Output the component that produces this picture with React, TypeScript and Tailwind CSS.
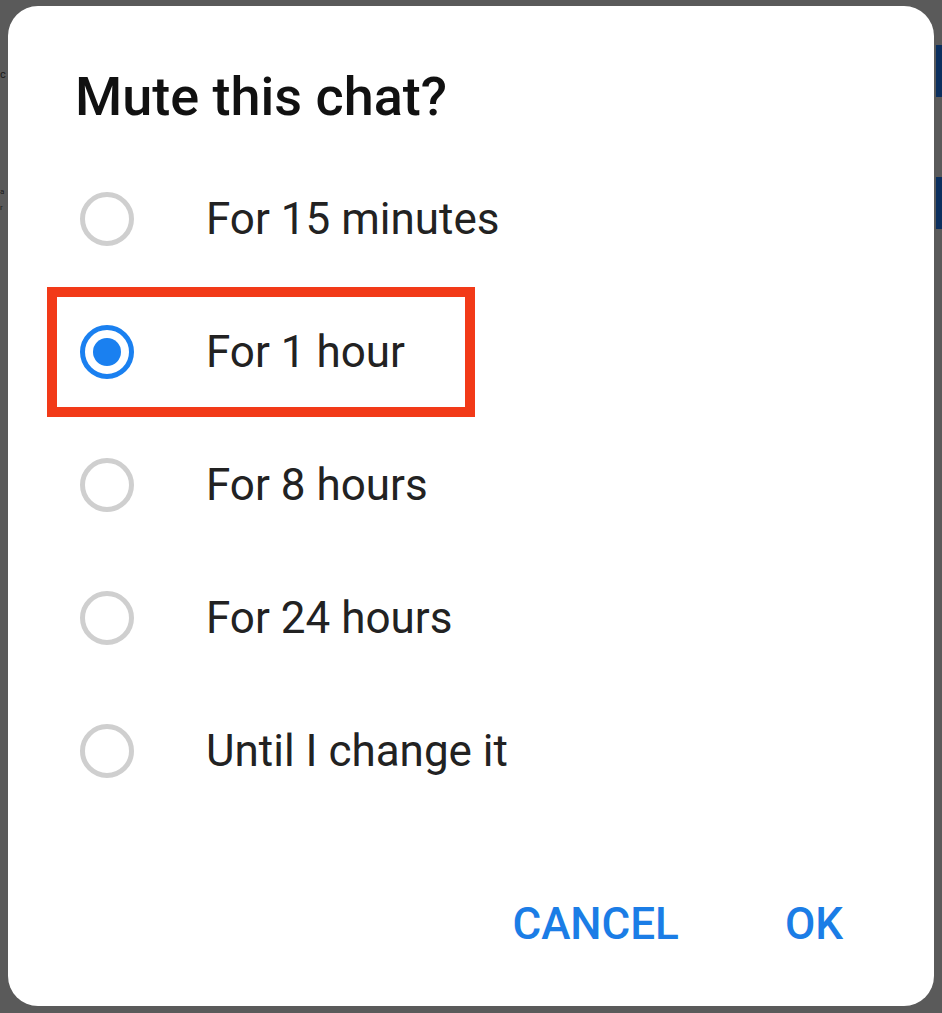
import React from "react";

const options = [
  "For 15 minutes",
  "For 1 hour",
  "For 8 hours",
  "For 24 hours",
  "Until I change it",
];

function Radio({ checked }: { checked: boolean }) {
  if (checked) {
    return (
      <div className="w-[54px] h-[54px] rounded-full border-[5px] border-[#1a80f0] flex items-center justify-center shrink-0">
        <div className="w-[28px] h-[28px] rounded-full bg-[#1a80f0]" />
      </div>
    );
  }
  return <div className="w-[54px] h-[54px] rounded-full border-[5px] border-[#cfcfcf] shrink-0" />;
}

export default function App() {
  return (
    <div
      className="w-[942px] h-[1013px] bg-[#5a5a5a] flex flex-row overflow-hidden"
      style={{ fontFamily: "Roboto, 'Noto Sans', sans-serif" }}
    >
      {/* left strip with bits of background text */}
      <div className="w-[8px] shrink-0 flex flex-col items-start">
        <div className="mt-[62px] text-[11px] leading-[26px] text-[#1a1a1a]">c</div>
        <div className="mt-[98px] text-[8px] leading-[12px] text-[#1a1a1a]">a</div>
        <div className="mt-[4px] text-[8px] leading-[12px] text-[#1a1a1a]">r</div>
      </div>

      {/* dialog */}
      <div className="mt-[6px] w-[926px] h-[1000px] bg-white rounded-[30px] flex flex-col shrink-0">
        <div className="pt-[59px] pl-[67px] text-[54px] leading-[64px] font-medium text-[#111111]">
          Mute this chat?
        </div>
        <div className="mt-[23px] flex flex-col">
          {options.map((o, i) => (
            <div key={o} className="relative h-[133px] flex items-center pl-[72px]">
              {i === 1 && (
                <div className="absolute left-[39px] top-[2px] w-[428px] h-[130px] border-[10px] border-[#f23a18]" />
              )}
              <Radio checked={i === 1} />
              <span className="ml-[72px] text-[44px] leading-[52px] text-[#222222]">{o}</span>
            </div>
          ))}
        </div>
        <div className="flex-1 flex items-center justify-end pr-[91px] gap-[106px] pt-[24px]">
          <span className="text-[44px] leading-[52px] font-medium text-[#1b7de6]">CANCEL</span>
          <span className="text-[44px] leading-[52px] font-medium text-[#1b7de6]">OK</span>
        </div>
      </div>

      {/* right strip */}
      <div className="w-[8px] shrink-0 flex flex-col">
        <div className="h-[45px]" />
        <div className="h-[52px] bg-[#0b2f5e] ml-[2px]" />
        <div className="h-[80px]" />
        <div className="h-[52px] bg-[#0b2f5e] ml-[2px]" />
      </div>
    </div>
  );
}
